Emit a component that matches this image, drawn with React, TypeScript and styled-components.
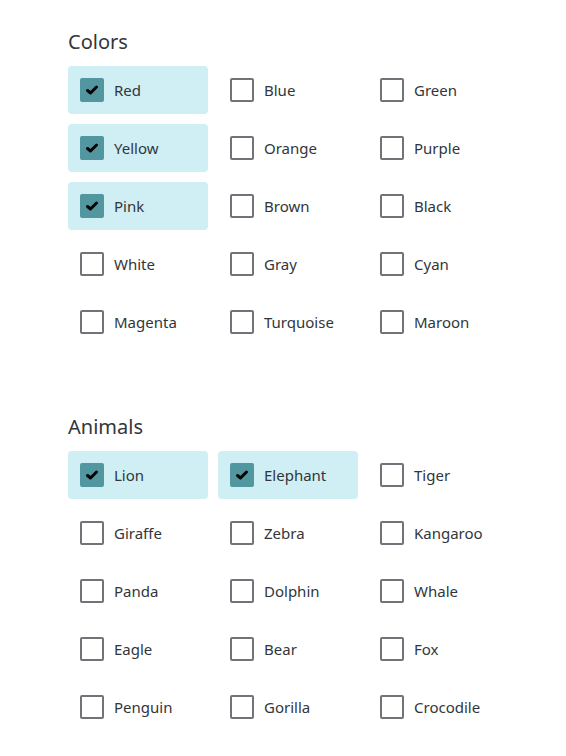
import React, { useState } from 'react'
import styled, { createGlobalStyle } from 'styled-components'

const GlobalStyle = createGlobalStyle`
  body {
    margin: 0;
    background: #ffffff;
    font-family: 'Noto Sans', 'Open Sans', sans-serif;
    color: #32363a;
  }
`

const Page = styled.div`
  padding: 30px 0 0 68px;
`

const Section = styled.section`
  & + & {
    margin-top: 69px;
  }
`

const Heading = styled.h2`
  margin: 0 0 12px;
  font-size: 20px;
  line-height: 24px;
  font-weight: 400;
  color: #32363a;
`

const Grid = styled.div`
  display: grid;
  grid-template-columns: repeat(3, 140px);
  grid-auto-rows: 48px;
  gap: 10px;
`

const Tile = styled.label<{ $checked: boolean }>`
  display: flex;
  align-items: center;
  gap: 10px;
  padding-left: 12px;
  padding-bottom: 1px;
  border-radius: 4px;
  background: ${p => (p.$checked ? '#cfeff4' : 'transparent')};
  font-size: 15px;
  color: #32363a;
  cursor: pointer;
  user-select: none;
`

const Box = styled.span<{ $checked: boolean }>`
  box-sizing: border-box;
  width: 24px;
  height: 24px;
  flex: none;
  border-radius: 2px;
  border: 2px solid ${p => (p.$checked ? '#52979f' : '#737278')};
  background: ${p => (p.$checked ? '#52979f' : '#ffffff')};
  display: flex;
  align-items: center;
  justify-content: center;
`

type Group = { title: string; items: string[]; initial: string[] }

const groups: Group[] = [
  {
    title: 'Colors',
    items: [
      'Red', 'Blue', 'Green',
      'Yellow', 'Orange', 'Purple',
      'Pink', 'Brown', 'Black',
      'White', 'Gray', 'Cyan',
      'Magenta', 'Turquoise', 'Maroon',
    ],
    initial: ['Red', 'Yellow', 'Pink'],
  },
  {
    title: 'Animals',
    items: [
      'Lion', 'Elephant', 'Tiger',
      'Giraffe', 'Zebra', 'Kangaroo',
      'Panda', 'Dolphin', 'Whale',
      'Eagle', 'Bear', 'Fox',
      'Penguin', 'Gorilla', 'Crocodile',
    ],
    initial: ['Lion', 'Elephant'],
  },
]

function CheckGroup({ group }: { group: Group }) {
  const [selected, setSelected] = useState<string[]>(group.initial)
  const toggle = (name: string) =>
    setSelected(s => (s.includes(name) ? s.filter(x => x !== name) : [...s, name]))

  return (
    <Section>
      <Heading>{group.title}</Heading>
      <Grid>
        {group.items.map(name => {
          const checked = selected.includes(name)
          return (
            <Tile key={name} $checked={checked} onClick={() => toggle(name)}>
              <Box $checked={checked}>
                {checked && (
                  <svg width="14" height="12" viewBox="0 0 14 12">
                    <path d="M2.5 6.5 L5.5 9 L11.5 3" fill="none" stroke="#000" strokeWidth="3" strokeLinecap="round" strokeLinejoin="round" />
                  </svg>
                )}
              </Box>
              {name}
            </Tile>
          )
        })}
      </Grid>
    </Section>
  )
}

export default function App() {
  return (
    <Page>
      <GlobalStyle />
      {groups.map(g => (
        <CheckGroup key={g.title} group={g} />
      ))}
    </Page>
  )
}
